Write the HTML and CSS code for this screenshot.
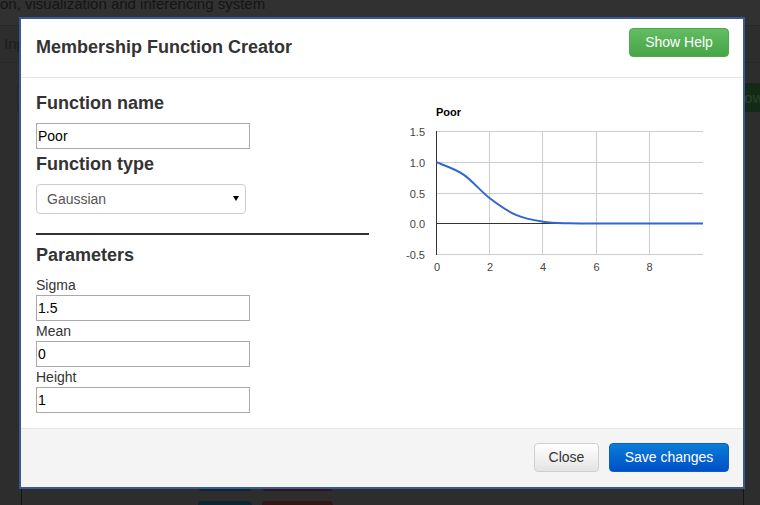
FILE: index.html
```html
<!DOCTYPE html>
<html lang="en">
<head>
<meta charset="utf-8">
<title>Membership Function Creator</title>
<link rel="stylesheet" href="styles.css">
</head>
<body>
<div class="page">
  <div class="topbar"><div class="brand">on, visualization and inferencing system</div></div>
  <div class="navrow"><span class="tab">Inp</span></div>
  <div class="toolrow">
    <div class="ghost-box"></div>
    <div class="ghost-green">Show</div>
  </div>
  <div class="panel">
    <div class="btnrow"><span class="gb teal"></span><span class="gb red"></span></div>
    <div class="btnrow"><span class="gb teal"></span><span class="gb red"></span></div>
  </div>
</div>

<div class="modal">
  <div class="modal-header">
    <h4 class="modal-title">Membership Function Creator</h4>
    <button class="btn btn-help">Show Help</button>
  </div>
  <div class="modal-body">
    <div class="col-form">
      <h4 class="sec">Function name</h4>
      <input class="field" type="text" value="Poor">
      <h4 class="sec after-input">Function type</h4>
      <div class="select-wrap">
        <select class="select"><option>Gaussian</option></select>
      </div>
      <hr class="divider">
      <h4 class="sec">Parameters</h4>
      <label class="lbl">Sigma</label>
      <input class="field" type="text" value="1.5">
      <label class="lbl">Mean</label>
      <input class="field" type="text" value="0">
      <label class="lbl">Height</label>
      <input class="field" type="text" value="1">
    </div>
    <div class="col-chart">
      <svg class="chart" width="345" height="190" viewBox="384 93 345 190">
        <text x="436" y="116" class="ct">Poor</text>
        <g stroke="#cccccc" stroke-width="1">
          <line x1="437" y1="131.5" x2="703" y2="131.5"/>
          <line x1="437" y1="162.5" x2="703" y2="162.5"/>
          <line x1="437" y1="193.5" x2="703" y2="193.5"/>
          <line x1="437" y1="254.5" x2="703" y2="254.5"/>
          <line x1="489.5" y1="131" x2="489.5" y2="255"/>
          <line x1="542.5" y1="131" x2="542.5" y2="255"/>
          <line x1="596.5" y1="131" x2="596.5" y2="255"/>
          <line x1="649.5" y1="131" x2="649.5" y2="255"/>
        </g>
        <line x1="436" y1="223.5" x2="703" y2="223.5" stroke="#333333" stroke-width="1"/>
        <line x1="436.5" y1="131" x2="436.5" y2="255" stroke="#333333" stroke-width="1"/>
        <g class="yl">
          <text x="425" y="135.5">1.5</text>
          <text x="425" y="166.5">1.0</text>
          <text x="425" y="197.5">0.5</text>
          <text x="425" y="227.5">0.0</text>
          <text x="425" y="258.5">-0.5</text>
        </g>
        <g class="xl">
          <text x="437" y="270.5">0</text>
          <text x="490" y="270.5">2</text>
          <text x="543" y="270.5">4</text>
          <text x="596.5" y="270.5">6</text>
          <text x="649.5" y="270.5">8</text>
        </g>
        <path d="M436.5 162.2 C440.95 164.23 454.32 168.38 463.2 174.4 C472.08 180.42 480.92 191.5 489.8 198.3 C498.68 205.1 507.62 211.3 516.5 215.2 C525.38 219.1 534.22 220.35 543.1 221.7 C551.98 223.05 560.92 223.0 569.8 223.3 C578.68 223.5 587.5 223.5 596.4 223.5 L703 223.5" fill="none" stroke="#3366cc" stroke-width="2"/>
      </svg>
    </div>
  </div>
  <div class="modal-footer">
    <button class="btn btn-close">Close</button>
    <button class="btn btn-save">Save changes</button>
  </div>
</div>
</body>
</html>
```
FILE: styles.css
```css
html, body {
  margin: 0;
  padding: 0;
}
body {
  width: 760px;
  height: 505px;
  overflow: hidden;
  background: #2d2d2d;
  font-family: "Liberation Sans", Arial, sans-serif;
  font-size: 14px;
  line-height: 20px;
  color: #333;
  position: relative;
}

/* dimmed page behind the dialog */
.page {
  width: 760px;
  height: 505px;
  overflow: hidden;
}
.topbar {
  height: 25px;
  background: #313131;
  border-bottom: 1px solid #272727;
  overflow: hidden;
}
.brand {
  font-size: 15px;
  line-height: 15px;
  margin-top: -4px;
  color: #141414;
  white-space: nowrap;
}
.navrow {
  height: 36px;
  border-bottom: 1px solid #282828;
}
.tab {
  display: inline-block;
  padding-left: 4px;
  margin-top: 8px;
  font-size: 15px;
  line-height: 20px;
  color: #1c1c1c;
}
.toolrow {
  margin-top: 20px;
  height: 29px;
  display: flex;
}
.ghost-box {
  margin-left: 17px;
  width: 60px;
  border: 1px solid #262626;
  border-radius: 4px;
}
.ghost-green {
  margin-left: auto;
  width: 46px;
  margin-right: -14px;
  background: #142a16;
  border-radius: 4px;
  color: #2a4229;
  font-size: 15px;
  line-height: 29px;
  text-indent: -2px;
  white-space: nowrap;
  overflow: hidden;
}
.panel {
  margin-top: 366px;
  margin-left: 21px;
  width: 721px;
  height: 27px;
  overflow: hidden;
  border-left: 1px solid #151515;
  border-right: 1px solid #151515;
}
.btnrow {
  display: flex;
  gap: 10px;
  padding-left: 176px;
  height: 13px;
  margin-bottom: 10px;
  overflow: hidden;
}
.gb {
  display: block;
  height: 13px;
  border-radius: 4px;
}
.gb.teal {
  width: 54px;
  background: #0c2632;
}
.gb.red {
  width: 71px;
  background: #311615;
}

/* dialog */
.modal {
  position: absolute;
  left: 19px;
  top: 17px;
  width: 726px;
  box-sizing: border-box;
  border: 2px solid #3a5896;
  background: #fff;
}
.modal-header {
  height: 59px;
  box-sizing: border-box;
  padding: 0 14px 0 15px;
  border-bottom: 1px solid #e5e5e5;
  display: flex;
  justify-content: space-between;
  align-items: flex-start;
}
.modal-title {
  margin: 18px 0 0 0;
  font-size: 18px;
  line-height: 20px;
  font-weight: bold;
  color: #333;
}
.btn {
  height: 29px;
  box-sizing: border-box;
  border-radius: 4px;
  font-family: "Liberation Sans", Arial, sans-serif;
  font-size: 14px;
  line-height: 27px;
  padding: 0;
  text-align: center;
  cursor: pointer;
}
.btn-help {
  margin-top: 9px;
  width: 100px;
  color: #fff;
  border: 1px solid #4cab4c;
  background: linear-gradient(to bottom, #63bd63 0%, #47a447 100%);
}
.modal-body {
  padding: 15px 14px 15px 15px;
  display: grid;
  grid-template-columns: 333px 1fr;
  column-gap: 15px;
  border-bottom: 1px solid #e5e5e5;
}
.sec {
  margin: 0 0 10px 0;
  font-size: 18px;
  line-height: 20px;
  font-weight: bold;
  color: #333;
}
.sec.after-input {
  margin-top: 5px;
}
.field {
  display: block;
  box-sizing: border-box;
  width: 214px;
  height: 26px;
  margin: 0;
  padding: 0 1px;
  border: 1px solid #a9a9a9;
  border-radius: 0;
  font-family: "Liberation Sans", Arial, sans-serif;
  font-size: 14px;
  color: #000;
  background: #fff;
}
.select-wrap {
  position: relative;
  width: 210px;
}
.select-wrap::after {
  content: "";
  position: absolute;
  right: 7px;
  top: 12px;
  border-left: 3px solid transparent;
  border-right: 3px solid transparent;
  border-top: 5px solid #000;
}
.select {
  display: block;
  appearance: none;
  -webkit-appearance: none;
  box-sizing: border-box;
  width: 210px;
  height: 30px;
  margin: 0;
  padding: 0 10px;
  border: 1px solid #cccccc;
  border-radius: 4px;
  background: #fff;
  color: #555;
  font-family: "Liberation Sans", Arial, sans-serif;
  font-size: 14px;
}
.divider {
  margin: 19px 0 10px 0;
  border: 0;
  border-top: 2px solid #333;
  height: 0;
}
.lbl {
  display: block;
  font-size: 14px;
  line-height: 20px;
  color: #333;
}
.col-chart {
  min-width: 0;
}
.chart {
  display: block;
}
.ct {
  font-family: "Liberation Sans", Arial, sans-serif;
  font-size: 11px;
  font-weight: bold;
  fill: #000;
}
.yl text {
  font-family: "Liberation Sans", Arial, sans-serif;
  font-size: 11px;
  fill: #444;
  text-anchor: end;
}
.xl text {
  font-family: "Liberation Sans", Arial, sans-serif;
  font-size: 11px;
  fill: #444;
  text-anchor: middle;
}
.modal-footer {
  height: 58px;
  box-sizing: border-box;
  background: #f4f4f4;
  padding: 14px 14px 15px 15px;
  display: flex;
  justify-content: flex-end;
  gap: 10px;
}
.btn-close {
  width: 65px;
  color: #333;
  border: 1px solid #cfcfcf;
  background: linear-gradient(to bottom, #ffffff 0%, #e4e4e4 100%);
}
.btn-save {
  width: 120px;
  color: #fff;
  border: 1px solid #0a5fc4;
  background: linear-gradient(to bottom, #0a7dd8 0%, #004fc6 100%);
}
```
